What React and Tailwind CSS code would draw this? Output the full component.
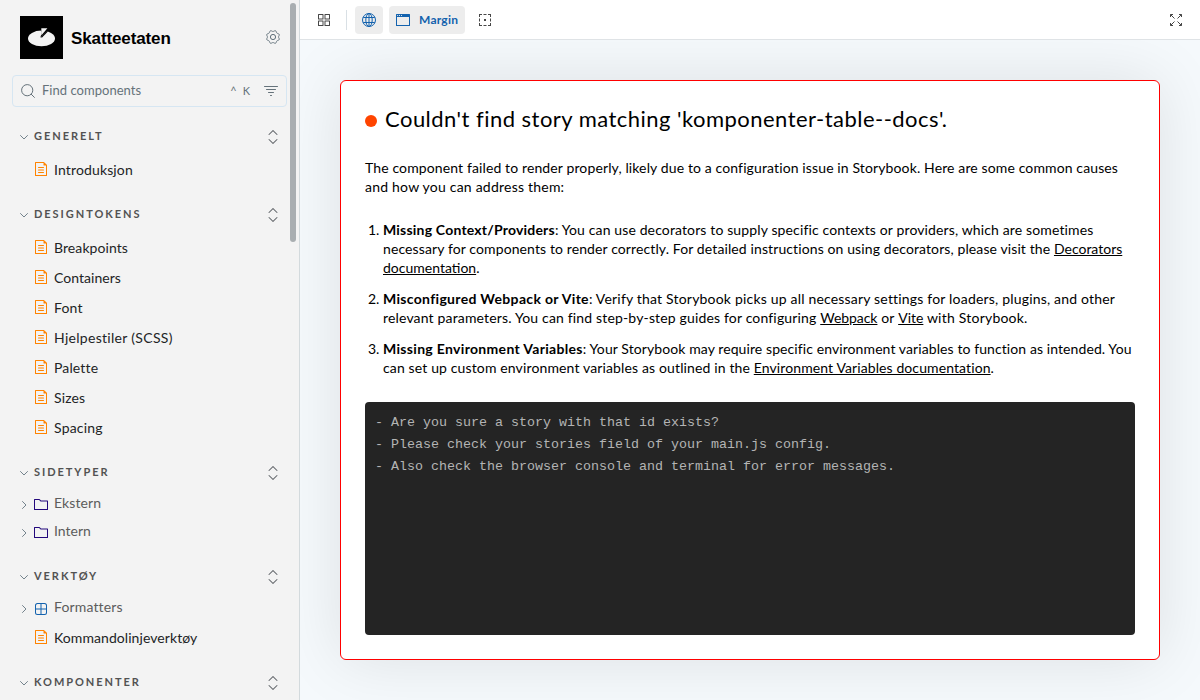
const sections = [
  { title: "GENERELT", items: [["doc", "Introduksjon", "tracking-[0.14px]"]] },
  {
    title: "DESIGNTOKENS",
    items: [
      ["doc", "Breakpoints", "tracking-[0.08px]"],
      ["doc", "Containers", "tracking-[0.04px]"],
      ["doc", "Font", "tracking-[0.14px]"],
      ["doc", "Hjelpestiler (SCSS)", "tracking-[0.3px]"],
      ["doc", "Palette", "tracking-[0.14px]"],
      ["doc", "Sizes", "tracking-[0.14px]"],
      ["doc", "Spacing", "tracking-[0.2px]"],
    ],
  },
  {
    title: "SIDETYPER",
    items: [
      ["folder", "Ekstern", "tracking-[0.1px]"],
      ["folder", "Intern", "tracking-[0.02px]"],
    ],
  },
  {
    title: "VERKTØY",
    items: [
      ["component", "Formatters", "tracking-[0.14px]"],
      ["doc", "Kommandolinjeverktøy", "tracking-[0.07px]"],
    ],
  },
  { title: "KOMPONENTER", items: [] },
];

function Icon({ size = 14, className = "", children }) {
  return (
    <svg width={size} height={size} viewBox="0 0 14 14" fill="currentColor" className={`shrink-0 ${className}`}>
      {children}
    </svg>
  );
}

function DocumentIcon() {
  return (
    <Icon className="text-[#ff8300]">
      <path d="M4 5.5C4 5.224 4.224 5 4.5 5h5a.5.5 0 0 1 0 1h-5a.5.5 0 0 1-.5-.5ZM4.5 7.5a.5.5 0 0 0 0 1h5a.5.5 0 0 0 0-1h-5ZM4 10.5a.5.5 0 0 1 .5-.5h5a.5.5 0 0 1 0 1h-5a.5.5 0 0 1-.5-.5Z" />
      <path fillRule="evenodd" d="M1.5 0a.5.5 0 0 0-.5.5v13a.5.5 0 0 0 .5.5h11a.5.5 0 0 0 .5-.5V3.207a.5.5 0 0 0-.146-.353L10.146.146A.5.5 0 0 0 9.793 0H1.5ZM2 1h7.5v2a.5.5 0 0 0 .5.5h2V13H2V1Z" />
    </Icon>
  );
}

function FolderIcon() {
  return (
    <Icon className="text-[#23087c]">
      <path fillRule="evenodd" d="M6.586 3.504l-1.5-1.5H1v9h12v-7.5H6.586zm.414-1L5.793 1.297a1 1 0 00-.707-.293H.5a.5.5 0 00-.5.5v10a.5.5 0 00.5.5h13a.5.5 0 00.5-.5v-8.5a.5.5 0 00-.5-.5H7z" />
    </Icon>
  );
}

function ComponentIcon() {
  return (
    <Icon className="text-[#1362ae]">
      <path fillRule="evenodd" d="M3.5 1.004a2.5 2.5 0 00-2.5 2.5v7a2.5 2.5 0 002.5 2.5h7a2.5 2.5 0 002.5-2.5v-7a2.5 2.5 0 00-2.5-2.5h-7zm8.5 5.5H7.5v-4.5h3a1.5 1.5 0 011.5 1.5v3zm0 1v3a1.5 1.5 0 01-1.5 1.5h-3v-4.5H12zm-5.5 4.5v-4.5H2v3a1.5 1.5 0 001.5 1.5h3zM2 6.504h4.5v-4.5h-3a1.5 1.5 0 00-1.5 1.5v3z" />
    </Icon>
  );
}

function Chevron({ down }) {
  return (
    <svg width="8" height="8" viewBox="0 0 8 8" fill="none" stroke="currentColor" strokeLinecap="round" className="shrink-0 text-[#73828c]">
      <path d={down ? "M.5 2.5 4 6l3.5-3.5" : "M2.5.5 6 4 2.5 7.5"} />
    </svg>
  );
}

function ExpandAllIcon() {
  return (
    <Icon className="text-[#5c6065]">
      <path d="M7.354.146l4 4a.5.5 0 01-.708.708L7 1.207 3.354 4.854a.5.5 0 01-.708-.708l4-4a.5.5 0 01.708 0zM11.354 9.146a.5.5 0 010 .708l-4 4a.5.5 0 01-.708 0l-4-4a.5.5 0 11.708-.708L7 12.793l3.646-3.647a.5.5 0 01.708 0z" />
    </Icon>
  );
}

function CogIcon() {
  const points = [];
  for (let i = 0; i <= 160; i++) {
    const a = (i / 160) * Math.PI * 2;
    const r = 6.1 + 0.6 * Math.cos(8 * a + Math.PI);
    points.push(`${(7 + r * Math.cos(a)).toFixed(2)},${(7 + r * Math.sin(a)).toFixed(2)}`);
  }
  return (
    <Icon className="text-[#5f6f79]">
      <polygon points={points.join(" ")} fill="none" stroke="currentColor" strokeLinejoin="round" />
      <circle cx="7" cy="7" r="2.6" fill="none" stroke="currentColor" />
    </Icon>
  );
}

function Item({ kind, label, tracking }) {
  if (kind === "doc") {
    return (
      <li className="flex h-[30px] items-center gap-1.5 pl-[34px]">
        <DocumentIcon />
        <span className={`pt-0.5 text-sm leading-5 text-[#222425] ${tracking}`}>{label}</span>
      </li>
    );
  }
  return (
    <li className="flex h-7 items-center pl-5 text-[#5c5c5c]">
      <div className="flex items-center pt-0.5">
        <Chevron />
        <span className="mx-1.5">{kind === "folder" ? <FolderIcon /> : <ComponentIcon />}</span>
      </div>
      <span className={`pb-0.5 text-sm leading-5 ${tracking}`}>{label}</span>
    </li>
  );
}

function Sidebar() {
  return (
    <aside className="relative h-[700px] w-[300px] shrink-0 overflow-hidden border-r border-[#d3dadd] bg-[#f3f3f3]">
      <div className="flex h-[75px] items-center pl-5 pr-[19px]">
        <svg width="43" height="43" viewBox="0 0 43 43" className="shrink-0">
          <rect width="43" height="43" />
          <ellipse cx="21.5" cy="22.4" rx="13.5" ry="7.8" fill="#f3f3f3" />
          <path d="M20.3 21.7 21.8 16.5 20.8 14.6 20.4 12.4H28.2L26.8 15.4Z" fill="#000" />
          <path d="M21.3 12.2h6.1l-6.1 7.3Z" fill="#f3f3f3" />
          <path d="m27.5 15.2-6.1 6.2" stroke="#000" strokeWidth="1.2" />
        </svg>
        <span className="ml-2 pt-0.5 font-['Liberation_Sans',sans-serif] text-[17px] font-bold leading-5 tracking-[-0.12px] text-black">Skatteetaten</span>
        <span className="ml-auto pb-0.5"><CogIcon /></span>
      </div>
      <div className="ml-3 flex h-8 w-[275px] items-center rounded border border-[#d6e6f2] px-2 text-[#65727a]">
        <Icon>
          <circle cx="6.2" cy="6.2" r="5.6" fill="none" stroke="currentColor" />
          <path d="m10.2 10.2 3.2 3.2" stroke="currentColor" strokeLinecap="round" />
        </Icon>
        <span className="ml-[7px] pb-0.5 text-[13px] leading-5 tracking-[0.03px]">Find components</span>
        <span className="ml-auto mr-[14px] flex gap-1.5 text-[11px] leading-4"><span>^</span><span>K</span></span>
        <Icon>
          <path d="M.5 2.5h13M2.5 5.5h9M4.5 8.5h5M6.5 11.5h1" stroke="currentColor" strokeLinecap="round" />
        </Icon>
      </div>
      <nav className="flex flex-col gap-4 pt-[15px]">
        {sections.map((section) => (
          <section key={section.title}>
            <div className="mb-1 flex h-7 items-center pl-5 pr-[19px]">
              <span className="pt-0.5"><Chevron down /></span>
              <h2 className="ml-1.5 text-[11px] font-bold leading-4 tracking-[1.95px] text-[#525252]">{section.title}</h2>
              <span className="ml-auto pt-0.5"><ExpandAllIcon /></span>
            </div>
            <ul>
              {section.items.map(([kind, label, tracking]) => (
                <Item key={label} kind={kind} label={label} tracking={tracking} />
              ))}
            </ul>
          </section>
        ))}
      </nav>
      <div className="absolute right-[3px] top-[3px] h-[239px] w-1.5 rounded-full bg-[#a9aeb1]" />
    </aside>
  );
}

function Toolbar() {
  return (
    <header className="flex h-10 shrink-0 items-center border-b border-[#dfe3e6] bg-white px-[17px] text-[#474747]">
      <Icon>
        <path fillRule="evenodd" d="M1 1.5a.5.5 0 01.5-.5H6a.5.5 0 01.5.5V6a.5.5 0 01-.5.5H1.5A.5.5 0 011 6V1.5zm1 .5v3.5h3.5V2H2zM7.5 1.5A.5.5 0 018 1h4.5a.5.5 0 01.5.5V6a.5.5 0 01-.5.5H8a.5.5 0 01-.5-.5V1.5zm1 .5v3.5H12V2H8.5zM1 8a.5.5 0 01.5-.5H6a.5.5 0 01.5.5v4.5a.5.5 0 01-.5.5H1.5a.5.5 0 01-.5-.5V8zm1 .5V12h3.5V8.5H2zM7.5 8a.5.5 0 01.5-.5h4.5a.5.5 0 01.5.5v4.5a.5.5 0 01-.5.5H8a.5.5 0 01-.5-.5V8zm1 .5V12H12V8.5H8.5z" />
      </Icon>
      <div className="ml-[15px] h-5 w-px bg-[#d9e0e5]" />
      <button className="ml-2 flex h-7 w-7 items-center justify-center rounded bg-[#ededed] text-[#1362ae]">
        <Icon>
          <g fill="none" stroke="currentColor">
            <circle cx="7" cy="7" r="6.5" />
            <ellipse cx="7" cy="7" rx="3.2" ry="6.5" />
            <path d="M7 .5v13M1.2 4.5h11.6M1.2 9.5h11.6" />
          </g>
        </Icon>
      </button>
      <button className="ml-1.5 flex h-7 w-[76px] items-center rounded bg-[#ededed] pl-[7px] text-[#1362ae]">
        <Icon>
          <path fillRule="evenodd" d="M.5 1a.5.5 0 0 0-.5.5v11a.5.5 0 0 0 .5.5h13a.5.5 0 0 0 .5-.5v-11a.5.5 0 0 0-.5-.5H.5ZM1 4h12v8H1V4Zm.2-2h.9v1h-.9V2Zm1.9 0H4v1h-.9V2ZM5 2h.9v1H5V2Z" />
        </Icon>
        <span className="ml-[9px] text-xs font-bold leading-4 tracking-[0.22px]">Margin</span>
      </button>
      <Icon className="ml-[13px]">
        <path d="M1 4V1h3v1H2v2zM5.5 1h3v1h-3zM10 1h3v3h-1V2h-2zM1 5.5h1v3H1zM12 5.5h1v3h-1zM1 10h1v2h2v1H1zM5.5 12h3v1h-3zM12 10h1v3h-3v-1h2zM6 6h2v2H6z" />
      </Icon>
      <Icon className="ml-auto">
        <path d="M1.5 4V1.5H4M1.5 1.5l4 4M10 1.5h2.5V4M12.5 1.5l-4 4M1.5 10v2.5H4M1.5 12.5l4-4M10 12.5h2.5V10M12.5 12.5l-4-4" fill="none" stroke="currentColor" />
      </Icon>
    </header>
  );
}

function ErrorCard() {
  return (
    <article className="flex h-[580px] flex-col rounded-md border border-[#ff0000] bg-white px-6 pb-6 pt-[23px] text-sm leading-[19px] text-black shadow-[0_0_64px_rgba(0,0,0,0.1)]">
      <div className="flex h-[30px] items-center gap-2">
        <span className="mt-1 h-3 w-3 rounded-full bg-[#ff4400]" />
        <h1 className="whitespace-nowrap text-[22px] leading-[30px] tracking-[0.47px]">Couldn't find story matching 'komponenter-table--docs'.</h1>
      </div>
      <p className="mt-6 whitespace-nowrap">
        <span className="tracking-[0.122px]">The component failed to render properly, likely due to a configuration issue in Storybook. Here are some common causes</span>
        <br />
        <span className="tracking-[0.22px]">and how you can address them:</span>
      </p>
      <ol className="mt-6 flex list-decimal flex-col gap-3 whitespace-nowrap pl-[18px]">
        <li>
          <b className="tracking-[0.2px]">Missing Context/Providers</b>
          <span className="tracking-[0.13px]">: You can use decorators to supply specific contexts or providers, which are sometimes</span>
          <br />
          <span className="tracking-[0.11px]">necessary for components to render correctly. For detailed instructions on using decorators, please visit the </span>
          <a className="underline">Decorators<br />documentation</a>.
        </li>
        <li>
          <b className="tracking-[0.32px]">Misconfigured Webpack or Vite</b>
          <span className="tracking-[0.19px]">: Verify that Storybook picks up all necessary settings for loaders, plugins, and other</span>
          <br />
          <span className="tracking-[0.16px]">relevant parameters. You can find step-by-step guides for configuring </span>
          <a className="tracking-[-0.05px] underline">Webpack</a>
          <span className="tracking-[0.2px]"> or </span>
          <a className="underline">Vite</a>
          <span className="tracking-[0.22px]"> with Storybook.</span>
        </li>
        <li>
          <b className="tracking-[0.32px]">Missing Environment Variables</b>
          <span className="tracking-[0.09px]">: Your Storybook may require specific environment variables to function as intended. You</span>
          <br />
          <span className="tracking-[0.135px]">can set up custom environment variables as outlined in the </span>
          <a className="tracking-[0.1px] underline">Environment Variables documentation</a>.
        </li>
      </ol>
      <pre className="mt-[25px] flex-1 rounded bg-[#242424] p-2.5 font-['Liberation_Mono',monospace] text-[13.33px] leading-[22px] text-[#b4b4b4]">
        {"- Are you sure a story with that id exists?\n- Please check your stories field of your main.js config.\n- Also check the browser console and terminal for error messages."}
      </pre>
    </article>
  );
}

export default function App() {
  return (
    <div className="flex h-[700px] w-[1200px] overflow-hidden font-['Lato',sans-serif]">
      <Sidebar />
      <main className="flex min-w-0 flex-1 flex-col">
        <Toolbar />
        <div className="flex-1 overflow-hidden bg-[#f5f9fc] p-10">
          <ErrorCard />
        </div>
      </main>
    </div>
  );
}
